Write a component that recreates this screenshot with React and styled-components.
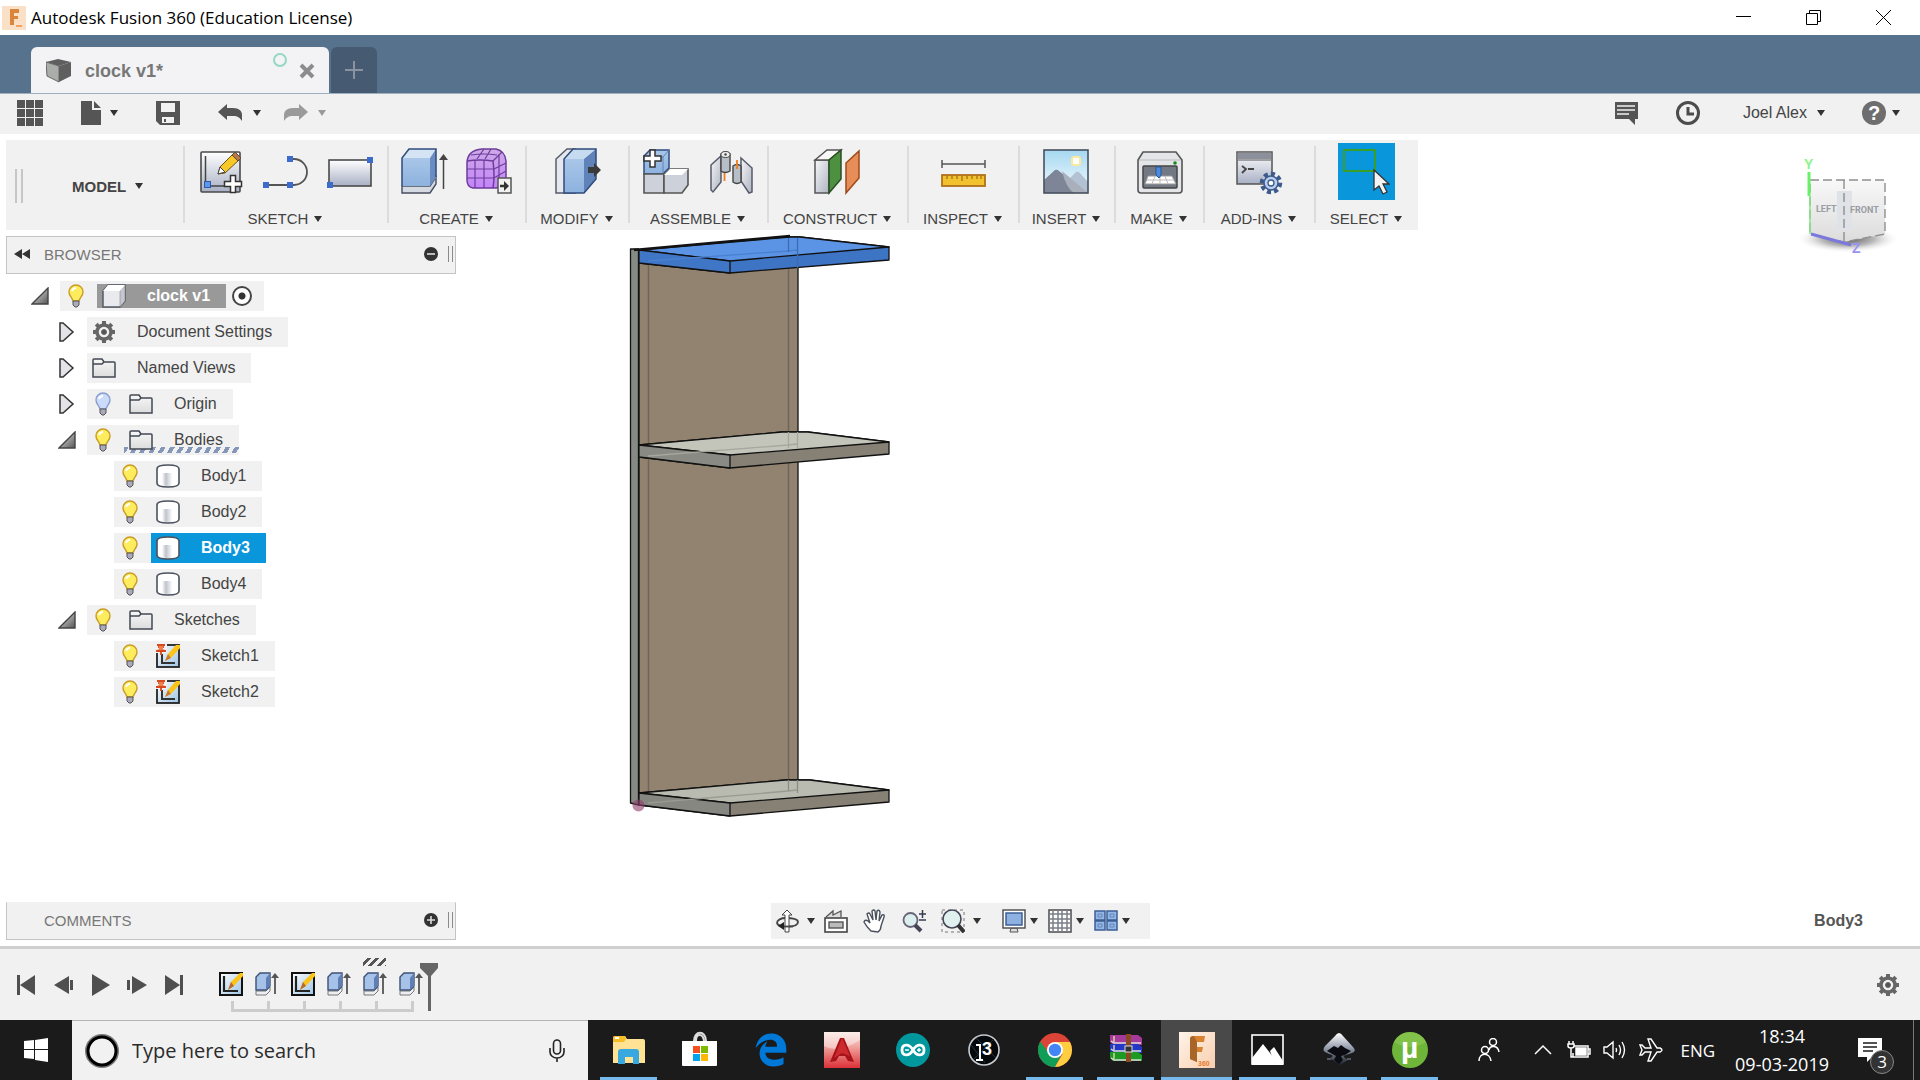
import React, { useState } from 'react';
import styled, { createGlobalStyle, css } from 'styled-components';
import { FaEdgeLegacy } from 'react-icons/fa';

const ribbonGroups = [
  { name: 'SKETCH', width: 204, icons: ['createSketch', 'line', 'rectangle'] },
  { name: 'CREATE', width: 138, icons: ['extrude', 'form'] },
  { name: 'MODIFY', width: 103, icons: ['pressPull'] },
  { name: 'ASSEMBLE', width: 139, icons: ['newComponent', 'joint'] },
  { name: 'CONSTRUCT', width: 140, icons: ['plane'] },
  { name: 'INSPECT', width: 111, icons: ['measure'] },
  { name: 'INSERT', width: 96, icons: ['picture'] },
  { name: 'MAKE', width: 89, icons: ['print'] },
  { name: 'ADD-INS', width: 111, icons: ['scripts'] },
  { name: 'SELECT', width: 104, icons: ['select'], active: true },
];

const treeRows = [
  { id: 'root', name: 'clock v1', level: 0, toggle: 'open', bulb: 'on', icon: 'component' },
  { id: 'settings', name: 'Document Settings', level: 1, toggle: 'closed', icon: 'gear' },
  { id: 'views', name: 'Named Views', level: 1, toggle: 'closed', icon: 'folder' },
  { id: 'origin', name: 'Origin', level: 1, toggle: 'closed', bulb: 'off', icon: 'folder' },
  { id: 'bodies', name: 'Bodies', level: 1, toggle: 'open', bulb: 'on', icon: 'folder', hatched: true },
  { id: 'body1', name: 'Body1', level: 2, bulb: 'on', icon: 'body' },
  { id: 'body2', name: 'Body2', level: 2, bulb: 'on', icon: 'body' },
  { id: 'body3', name: 'Body3', level: 2, bulb: 'on', icon: 'body' },
  { id: 'body4', name: 'Body4', level: 2, bulb: 'on', icon: 'body' },
  { id: 'sketches', name: 'Sketches', level: 1, toggle: 'open', bulb: 'on', icon: 'folder' },
  { id: 'sketch1', name: 'Sketch1', level: 2, bulb: 'on', icon: 'sketch' },
  { id: 'sketch2', name: 'Sketch2', level: 2, bulb: 'on', icon: 'sketch' },
];

const playback = [
  { name: 'Go to beginning', path: 'M1 1h3v20H1zM19 1v20L4 11z' },
  { name: 'Step back', path: 'M16 2v18L1 11zM17 6h3v10h-3z' },
  { name: 'Play', path: 'M2 0l18 11L2 22z' },
  { name: 'Step forward', path: 'M5 2v18l15-9zM0 6h3v10H0z' },
  { name: 'Go to end', path: 'M16 1h3v20h-3zM1 1v20l15-10z' },
];

const features = ['sketch', 'extrude', 'sketch', 'extrude', 'extrude', 'extrude'];

const taskApps = [
  { name: 'File Explorer', icon: 'explorer', open: true },
  { name: 'Microsoft Store', icon: 'store' },
  { name: 'Microsoft Edge', icon: 'edge' },
  { name: 'AutoCAD', icon: 'autocad' },
  { name: 'Arduino', icon: 'arduino' },
  { name: 'Processing', icon: 'processing' },
  { name: 'Google Chrome', icon: 'chrome', open: true },
  { name: 'WinRAR', icon: 'winrar', open: true },
  { name: 'Fusion 360', icon: 'fusion', open: true, active: true },
  { name: 'Photos', icon: 'photos', open: true },
  { name: 'Inkscape', icon: 'inkscape', open: true },
  { name: 'uTorrent', icon: 'utorrent', open: true },
];

const App = () => {
  const [selected, setSelected] = useState('body3');
  const [search, setSearch] = useState('');

  return (
    <S_App>
      <GlobalStyle />
      <Gradients />
      <TitleBar />
      <TabBar />
      <QuickBar />
      <S_Viewport>
        <Model />
        <ViewCube />
        <Ribbon />
        <S_Panel>
          <S_PanelHeader>
            <S_PlainButton aria-label="Collapse browser">
              <svg width="16" height="10" viewBox="0 0 16 10">
                <path d="M8 0v10L0 5zM16 0v10L8 5z" fill="#333" />
              </svg>
            </S_PlainButton>
            <S_PanelTitle>BROWSER</S_PanelTitle>
            <PanelEnd sign="minus" />
          </S_PanelHeader>
          <S_Tree>
            {treeRows.map((row) => (
              <TreeRow key={row.id} row={row} selected={selected === row.id} onSelect={setSelected} />
            ))}
          </S_Tree>
        </S_Panel>
        <S_ViewportFooter>
          <S_PanelHeader $bottom>
            <S_PanelIndent />
            <S_PanelTitle>COMMENTS</S_PanelTitle>
            <PanelEnd sign="plus" />
          </S_PanelHeader>
          <NavBar />
          <S_SelectionName>Body3</S_SelectionName>
        </S_ViewportFooter>
      </S_Viewport>
      <Timeline />
      <S_Taskbar>
        <S_Start aria-label="Start">
          <svg width="24" height="24" viewBox="0 0 24 24" fill="#fff">
            <path d="M0 3l10-1v9H0zM11 2l13-2v11H11zM0 12h10v9L0 20zM11 12h13v12l-13-2z" />
          </svg>
        </S_Start>
        <S_Search>
          <svg width="34" height="34" viewBox="0 0 34 34" fill="none">
            <circle cx="17" cy="17" r="15" stroke="#777" strokeWidth="4" />
            <circle cx="17" cy="17" r="14" stroke="#000" strokeWidth="3" />
          </svg>
          <S_SearchInput
            type="text"
            aria-label="Type here to search"
            placeholder="Type here to search"
            value={search}
            onChange={(e) => setSearch(e.target.value)}
          />
          <svg width="18" height="24" viewBox="0 0 18 24" fill="none" stroke="#222" strokeWidth="1.6">
            <rect x="5.5" y="1" width="7" height="14" rx="3.5" />
            <path d="M2 9v4a7 6 0 0 0 14 0V9M9 19v4" />
          </svg>
        </S_Search>
        <S_TaskApps>
          {taskApps.map((app) => (
            <S_TaskApp key={app.name} aria-label={app.name} $open={app.open} $active={app.active}>
              <TaskIcon name={app.icon} />
            </S_TaskApp>
          ))}
        </S_TaskApps>
        <Tray />
      </S_Taskbar>
    </S_App>
  );
};

export default App;

const Gradients = () => (
  <S_Defs aria-hidden="true">
    <defs>
      <linearGradient id="metal" x1="0" y1="0" x2="0" y2="1">
        <stop offset="0" stopColor="#fff" />
        <stop offset="1" stopColor="#a8b0c4" />
      </linearGradient>
      <linearGradient id="silver" x1="0" y1="0" x2="1" y2="1">
        <stop offset="0" stopColor="#f6f6f8" />
        <stop offset="1" stopColor="#aeb4c0" />
      </linearGradient>
      <linearGradient id="blueFace" x1="0" y1="0" x2="0" y2="1">
        <stop offset="0" stopColor="#a9c6e8" />
        <stop offset="1" stopColor="#8cb2de" />
      </linearGradient>
      <linearGradient id="purple" x1="0" y1="0" x2="0" y2="1">
        <stop offset="0" stopColor="#cdaae6" />
        <stop offset="1" stopColor="#c384fb" />
      </linearGradient>
      <linearGradient id="sky" x1="0" y1="0" x2="0" y2="1">
        <stop offset="0" stopColor="#a5d8f0" />
        <stop offset="1" stopColor="#f5fbff" />
      </linearGradient>
      <linearGradient id="arrowFill" x1="0" y1="0" x2="1" y2="1">
        <stop offset="0" stopColor="#eee" />
        <stop offset="1" stopColor="#555" />
      </linearGradient>
      <linearGradient id="bodyFill" x1="0" y1="0" x2="1" y2="0">
        <stop offset="0" stopColor="#fff" />
        <stop offset="0.3" stopColor="#bfc3cc" />
        <stop offset="0.8" stopColor="#fff" />
      </linearGradient>
      <linearGradient id="sketchFill" x1="0" y1="0" x2="1" y2="1">
        <stop offset="0" stopColor="#fff" />
        <stop offset="1" stopColor="#9cc4e6" />
      </linearGradient>
      <linearGradient id="cubeFace" x1="0" y1="0" x2="0" y2="1">
        <stop offset="0" stopColor="#f8f8f8" />
        <stop offset="1" stopColor="#dcdcdc" />
      </linearGradient>
      <radialGradient id="cubeShadow">
        <stop offset="0" stopColor="#555" />
        <stop offset="0.5" stopColor="#999" stopOpacity="0.7" />
        <stop offset="1" stopColor="#fff" stopOpacity="0" />
      </radialGradient>
      <linearGradient id="redTile" x1="0" y1="0" x2="0" y2="1">
        <stop offset="0" stopColor="#fbe3dd" />
        <stop offset="0.4" stopColor="#f0a59f" />
        <stop offset="1" stopColor="#dc3038" />
      </linearGradient>
      <linearGradient id="orangeTile" x1="0" y1="0" x2="1" y2="1">
        <stop offset="0" stopColor="#fff4ea" />
        <stop offset="1" stopColor="#f8cfae" />
      </linearGradient>
      <linearGradient id="ink" x1="0" y1="0" x2="0" y2="1">
        <stop offset="0" stopColor="#fff" />
        <stop offset="0.5" stopColor="#8d95a6" />
        <stop offset="1" stopColor="#1c222c" />
      </linearGradient>
    </defs>
  </S_Defs>
);

const WindowButton = ({ name, path }) => (
  <S_WindowControl aria-label={name}>
    <svg width="15" height="15" viewBox="0 0 15 15" fill="none" stroke="#000">
      <path d={path} />
    </svg>
  </S_WindowControl>
);

const TitleBar = () => (
  <S_TitleBar>
    <svg width="24" height="24" viewBox="0 0 24 24">
      <rect width="24" height="24" fill="#fbe0c8" />
      <path d="M8 3h9v4h-5v3h4v3h-4v6H8z" fill="#d9853b" />
      <path d="M14 20h6" stroke="#f2a45e" strokeWidth="2" />
    </svg>
    <S_TitleText>Autodesk Fusion 360 (Education License)</S_TitleText>
    <WindowButton name="Minimize" path="M0 6.5h15" />
    <WindowButton name="Restore" path="M0.5 3.5h11v11h-11zM3.5 3.5v-3h11v11h-3" />
    <WindowButton name="Close" path="M0 0l15 15M15 0L0 15" />
  </S_TitleBar>
);

const TabBar = () => (
  <S_TabBar>
    <S_Tab>
      <svg width="25" height="24" viewBox="0 0 25 24">
        <path d="M0 3L12 0l13 3-12 4z" fill="#5f5f5f" />
        <path d="M0 3l13 4v16L1 17z" fill="#abadab" stroke="#666" />
        <path d="M13 7l12-4v14l-12 6z" fill="#5f5f5f" />
      </svg>
      <S_TabName>clock v1*</S_TabName>
      <S_SyncRing />
      <S_PlainButton aria-label="Close tab">
        <svg width="16" height="16" viewBox="0 0 16 16">
          <path d="M2 2l12 12M14 2L2 14" stroke="#8c8c8c" strokeWidth="4" />
        </svg>
      </S_PlainButton>
    </S_Tab>
    <S_NewTab aria-label="New tab">
      <svg width="18" height="18" viewBox="0 0 18 18">
        <path d="M9 0v18M0 9h18" stroke="#8b93a0" strokeWidth="2" />
      </svg>
    </S_NewTab>
  </S_TabBar>
);

const QuickBar = () => (
  <S_QuickBar>
    <S_QuickGroup $gap={38}>
      <S_PlainButton aria-label="Data panel">
        <svg width="26" height="26" viewBox="0 0 26 26" fill="#555">
          <path d="M0 0h8v8H0zM9 0h8v8H9zM18 0h8v8h-8zM0 9h8v8H0zM9 9h8v8H9zM18 9h8v8h-8zM0 18h8v8H0zM9 18h8v8H9zM18 18h8v8h-8z" />
        </svg>
      </S_PlainButton>
      <S_PlainButton aria-label="File" $gap={9}>
        <svg width="20" height="24" viewBox="0 0 20 24" fill="#555">
          <path d="M0 0h11v9h9v15H0zM13 0l7 7h-7z" />
        </svg>
        <S_Caret />
      </S_PlainButton>
      <S_PlainButton aria-label="Save">
        <svg width="24" height="24" viewBox="0 0 24 24">
          <path d="M0 0h24v24H4l-4-4z" fill="#555" />
          <path d="M5 2h14v9H5zM6 16h12v6H6z" fill="#f1f1f1" />
          <path d="M8 18h2v3H8z" fill="#555" />
        </svg>
      </S_PlainButton>
      <S_QuickGroup $gap={22}>
        <S_PlainButton aria-label="Undo" $gap={10}>
          <svg width="25" height="18" viewBox="0 0 25 18">
            <path d="M0 8l9-8v4h6c6 0 9 3 9 7v6c-2-3-4-5-9-5H9v4z" fill="#555" />
          </svg>
          <S_Caret />
        </S_PlainButton>
        <S_PlainButton aria-label="Redo" $gap={10}>
          <svg width="25" height="18" viewBox="0 0 25 18">
            <path d="M25 8l-9-8v4h-6c-6 0-9 3-9 7v6c2-3 4-5 9-5h6v4z" fill="#9a9a9a" />
          </svg>
          <S_Caret $light />
        </S_PlainButton>
      </S_QuickGroup>
    </S_QuickGroup>
    <S_QuickGroup $gap={37}>
      <S_PlainButton aria-label="Comments">
        <svg width="25" height="23" viewBox="0 0 25 23">
          <path d="M1 0h23v17h-3v6l-6-6H1z" fill="#555" />
          <path d="M3 4h18M3 8h18M3 12h12" stroke="#f1f1f1" strokeWidth="1.5" />
        </svg>
      </S_PlainButton>
      <S_PlainButton aria-label="Job status">
        <svg width="24" height="24" viewBox="0 0 24 24" fill="none" stroke="#4c4c4c">
          <circle cx="12" cy="12" r="10.5" strokeWidth="3" />
          <path d="M12 6v7h6" strokeWidth="3" />
        </svg>
      </S_PlainButton>
      <S_UserButton $gap={10}>
        Joel Alex
        <S_Caret />
      </S_UserButton>
      <S_PlainButton aria-label="Help" $gap={6}>
        <S_HelpDisc>?</S_HelpDisc>
        <S_Caret />
      </S_PlainButton>
    </S_QuickGroup>
  </S_QuickBar>
);

const Ribbon = () => (
  <S_Ribbon>
    <S_Workspace>
      <S_Grip />
      <S_WorkspaceButton $gap={9}>
        MODEL
        <S_Caret />
      </S_WorkspaceButton>
    </S_Workspace>
    {ribbonGroups.map((group) => (
      <S_RibbonGroup key={group.name} $width={group.width}>
        <S_RibbonIcons>
          {group.icons.map((icon) => (
            <S_RibbonTool key={icon} aria-label={icon} $active={group.active}>
              <RibbonIcon name={icon} />
            </S_RibbonTool>
          ))}
        </S_RibbonIcons>
        <S_RibbonLabel $gap={6}>
          {group.name}
          <S_Caret />
        </S_RibbonLabel>
      </S_RibbonGroup>
    ))}
  </S_Ribbon>
);

const ribbonDrawings = {
  createSketch: (
    <>
      <rect x="4" y="4" width="39" height="40" rx="1" fill="url(#metal)" stroke="#4a4a4a" strokeWidth="1.6" />
      <path d="M8.5 8v30H30" fill="none" stroke="#444" strokeWidth="1.5" />
      <rect x="7.5" y="33.5" width="6" height="6" fill="#5e96e8" stroke="#2b5ab0" />
      <path d="M21 26l2-7L37 5l6 6-15 14z" fill="#f8c926" stroke="#6b5210" />
      <path d="M35 7l3-3 6 6-3 3z" fill="#b97846" stroke="#5d4a3a" />
      <path d="M21 26l2-7 5 5z" fill="#fff" stroke="#444" />
      <path d="M33.5 27.5h5v6h6v5h-6v6h-5v-6h-6v-5h6z" fill="#fff" stroke="#333" strokeWidth="1.5" />
    </>
  ),
  line: (
    <>
      <path d="M5 37h28a13 13 0 0 0 0-26h-4" fill="none" stroke="#555" strokeWidth="1.8" />
      <path d="M2 34h6v6H2zM26 34h6v6h-6zM26 8h6v6h-6z" fill="#3b6ccb" />
    </>
  ),
  rectangle: (
    <>
      <rect x="4" y="12" width="42" height="26" fill="url(#metal)" stroke="#4a4a4a" strokeWidth="1.6" />
      <path d="M2 34h6v6H2zM42 9h6v6h-6z" fill="#3b6ccb" />
    </>
  ),
  extrude: (
    <>
      <path d="M2 38h28l6-9v7l-6 9H2z" fill="#d5d9e2" stroke="#474d5c" strokeWidth="1.4" />
      <path d="M2 10h28v28H2z" fill="url(#blueFace)" />
      <path d="M2 10l7-9h27l-6 9z" fill="#d4e4f4" />
      <path d="M30 10l6-9v29l-6 8z" fill="#6a8cc0" />
      <path d="M2 38V10l7-9h27v28" fill="none" stroke="#2f4b7c" strokeWidth="1.5" />
      <path d="M43.5 10v31" stroke="#444" strokeWidth="1.5" />
      <path d="M39 12l4.5-6 4.5 6z" fill="#444" />
    </>
  ),
  form: (
    <>
      <path d="M3 14Q4 2 18 1h14q9 2 10 12v16q-2 10-10 11H9q-6-1-6-8z" fill="url(#purple)" stroke="#6e3d9c" strokeWidth="1.5" />
      <path d="M3 13q13-2 26 0 2 15 0 27" fill="none" stroke="#6e3d9c" strokeWidth="1.5" />
      <path d="M11 12v28M20 12v28M3 21h27l12-6M3 30h27l12-7M29 13l9-9M7 7q13-2 26 0M13 11l7-10M21 11l6-10M35 6v31" fill="none" stroke="#6e3d9c" strokeWidth="1.2" />
      <rect x="34" y="30" width="13" height="15" fill="#f1f1f1" stroke="#555" strokeWidth="1.5" />
      <path d="M36 38h5" stroke="#333" strokeWidth="2.5" />
      <path d="M40 33l5 5-5 5z" fill="#333" />
    </>
  ),
  pressPull: (
    <>
      <path d="M3 45V11L14 1h8v44z" fill="#e6e8ee" stroke="#555b6a" strokeWidth="1.5" />
      <path d="M11 11h20v34H11z" fill="url(#blueFace)" />
      <path d="M11 11l9-10h23L31 11z" fill="#c7dbf0" />
      <path d="M31 11L43 1v30L31 45z" fill="#5f83b8" />
      <path d="M11 45V11l9-10h23v30L31 45z" fill="none" stroke="#2f4b7c" strokeWidth="1.5" />
      <path d="M35 19h6v-4l7 7-7 7v-4h-6z" fill="#3a3a3a" />
    </>
  ),
  newComponent: (
    <>
      <path d="M2 8l6-6h19v18l-6 6H2z" fill="url(#blueFace)" stroke="#2f4b7c" strokeWidth="1.5" />
      <path d="M21 26V9l6-7M21 9H8" fill="none" stroke="#5f83b8" />
      <path d="M2 26h20v19H2z" fill="#cdd1d9" stroke="#555" strokeWidth="1.6" />
      <path d="M22 27l6-6h18v16l-6 8H22z" fill="#cdd1d9" stroke="#555" strokeWidth="1.6" />
      <path d="M22 27l6-6h18l-6 6z" fill="#fff" />
      <path d="M8 2h5v6h6v5h-6v6H8v-6H2V8h6z" fill="#fff" stroke="#333" strokeWidth="1.5" />
    </>
  ),
  joint: (
    <>
      <path d="M5 17l10-9v26L7 44l-2-2z" fill="url(#silver)" stroke="#555b6a" strokeWidth="1.5" />
      <path d="M15 6v17q4 3 9 0V6q-4-4-9 0z" fill="#b8bec8" stroke="#444" strokeWidth="1.4" />
      <ellipse cx="19.5" cy="6.5" rx="4.5" ry="3" fill="#eee" stroke="#444" />
      <circle cx="19.5" cy="6.5" r="1.2" fill="#444" />
      <path d="M35 10l11 10v24l-3 1-8-12z" fill="url(#silver)" stroke="#555b6a" strokeWidth="1.5" />
      <path d="M27 18v16q4 3 8 0V18q-4-3-8 0z" fill="#b8bec8" stroke="#444" strokeWidth="1.4" />
      <path d="M18.5 25v8M31 12v9" stroke="#f07c1e" strokeWidth="1.8" />
    </>
  ),
  plane: (
    <>
      <path d="M2 12h14v33H2z" fill="url(#silver)" stroke="#555" strokeWidth="1.5" />
      <path d="M2 12L14 2h14L16 12z" fill="#f8f8f8" stroke="#555" strokeWidth="1.5" />
      <path d="M16 12L28 2v29L16 45z" fill="#4d9140" stroke="#2a4d24" strokeWidth="1.5" />
      <path d="M33 15L46 3v27L33 45z" fill="#e68d58" stroke="#9c4a1c" strokeWidth="1.5" />
    </>
  ),
  measure: (
    <>
      <path d="M3 12v8M46 12v8M3 16h43" stroke="#555" strokeWidth="1.5" />
      <rect x="3" y="27" width="43" height="11" fill="#f2c12e" stroke="#b0701c" strokeWidth="1.8" />
      <path d="M8 28v3M13 28v3M18 28v3M23 28v5M28 28v3M33 28v3M38 28v3M42 28v3" stroke="#8a5a12" />
    </>
  ),
  picture: (
    <>
      <rect x="2" y="2" width="44" height="43" fill="url(#sky)" />
      <rect x="30" y="9" width="8" height="8" rx="2" fill="#fff" stroke="#fbe9a0" strokeWidth="2" />
      <path d="M24 34l10-10q2-1 4 1l8 9v11H24z" fill="#b3c2d2" />
      <path d="M2 32l11-10q2-1 4 1l28 22H2z" fill="#7d8596" />
      <path d="M20 23l26 22H32q-8-5-12-22z" fill="#a9b0bc" />
      <rect x="2" y="2" width="44" height="43" fill="none" stroke="#46505e" strokeWidth="1.6" />
    </>
  ),
  print: (
    <>
      <path d="M3 12l5-8h33l6 8v30q0 3-3 3H6q-3 0-3-3z" fill="#e4e5e8" stroke="#555" strokeWidth="1.6" />
      <path d="M4 12h42" stroke="#bbb" />
      <rect x="8" y="18" width="34" height="22" rx="1" fill="#737984" stroke="#444" strokeWidth="1.5" />
      <path d="M13 28h24l4 8H10z" fill="#fff" stroke="#999" />
      <path d="M20 28l-3 8M25 28v8M30 28l3 8M12 32h27" stroke="#bbb" />
      <path d="M21 19h5v8l-2 3-3-3z" fill="#4a8ae0" stroke="#2558a0" />
      <circle cx="40" cy="15" r="1.8" fill="#128a1c" />
    </>
  ),
  scripts: (
    <>
      <rect x="2" y="4" width="35" height="32" fill="url(#metal)" stroke="#555" strokeWidth="1.5" />
      <rect x="3" y="5" width="33" height="6" fill="#8b909b" />
      <path d="M3 12h33" stroke="#555" />
      <path d="M7 18l4 3-4 4M13 21h6" fill="none" stroke="#444" strokeWidth="1.8" />
      <circle cx="36" cy="35" r="9" fill="none" stroke="#3d5a8c" strokeWidth="4.5" strokeDasharray="4 3" />
      <circle cx="36" cy="35" r="7" fill="#b9cfee" stroke="#3d5a8c" strokeWidth="1.5" />
      <circle cx="36" cy="35" r="3" fill="#fff" stroke="#3d5a8c" strokeWidth="1.3" />
    </>
  ),
  select: (
    <>
      <rect x="2" y="2" width="31" height="21" fill="none" stroke="#3a9f26" strokeWidth="2" />
      <path d="M32 22v20l5-4 4 8 4-2-4-8h6z" fill="#f4f4f4" stroke="#333" strokeWidth="1.3" />
    </>
  ),
};

const RibbonIcon = ({ name }) => (
  <svg width="48" height="48" viewBox="0 0 48 48">
    {ribbonDrawings[name]}
  </svg>
);

const Gear = () => (
  <svg width="24" height="24" viewBox="0 0 24 24" fill="none" stroke="#666">
    <path d="M12 1v22M1 12h22M4.2 4.2l15.6 15.6M19.8 4.2L4.2 19.8" strokeWidth="4" />
    <circle cx="12" cy="12" r="7" fill="#f1f1f1" strokeWidth="3.5" />
    <circle cx="12" cy="12" r="2.5" fill="#555" strokeWidth="1" />
  </svg>
);

const treeDrawings = {
  component: (
    <>
      <path d="M1 7l5-6h17v16l-5 6H1z" fill="#e9eaee" stroke="#555b66" strokeWidth="1.5" />
      <path d="M18 7v16l5-6V1z" fill="#c4c7cf" stroke="#777" strokeWidth="0.5" />
      <path d="M1 7l5-6h17l-5 6z" fill="#fff" />
    </>
  ),
  folder: (
    <path d="M1 21V4q0-1 1-1h8l2 3h10q1 0 1 1v14zM1 8h9l2-2" fill="url(#cubeFace)" stroke="#434854" strokeWidth="1.5" />
  ),
  body: (
    <>
      <path d="M1 5q0-4 11-4t11 4v14q0 4-11 4T1 19z" fill="#fff" stroke="#4c525e" strokeWidth="1.6" />
      <path d="M6 9h13v12q-7 2-13 0z" fill="url(#bodyFill)" />
    </>
  ),
  sketch: (
    <>
      <rect x="1" y="1" width="22" height="22" fill="url(#sketchFill)" stroke="#222" strokeWidth="1.8" />
      <path d="M0 0h11v9H0z" fill="#f1f1f1" />
      <path d="M6 10v9h13" fill="none" stroke="#333" strokeWidth="2" />
      <path d="M9 17l3-7 8-9h4v3l-9 10z" fill="#fcc419" />
      <path d="M12 10l3 4-6 3z" fill="#c9793a" />
      <path d="M1 1h8M3 1v3M7 1v3M0 7h10M5 7v4" fill="none" stroke="#d8491f" strokeWidth="1.8" />
      <path d="M3 2h4v3l2 1H1l2-1z" fill="#f0804c" />
    </>
  ),
};

const TreeIcon = ({ name }) => {
  if (name === 'gear') return <Gear />;
  return (
    <svg width="24" height="24" viewBox="0 0 24 24">
      {treeDrawings[name]}
    </svg>
  );
};

const Bulb = ({ on }) => (
  <svg width="16" height="24" viewBox="0 0 16 24">
    <path
      d="M8 1a7 7 0 0 1 7 7c0 4-3 5-4 9H5C4 13 1 12 1 8a7 7 0 0 1 7-7z"
      fill={on ? '#fcec5e' : '#cbdcfb'}
      stroke={on ? '#c99c28' : '#8a9dcc'}
      strokeWidth="1.4"
    />
    <path d="M4 7q1-3 4-3" fill="none" stroke="#fff" strokeWidth="2" />
    <path d="M5 17h6v4l-2 2H7l-2-2z" fill="#aab" stroke="#555" />
  </svg>
);

const TreeRow = ({ row, selected, onSelect }) => (
  <S_TreeRow $level={row.level}>
    <S_Toggle aria-label={row.name} disabled={!row.toggle}>
      {row.toggle === 'open' && (
        <svg width="18" height="18" viewBox="0 0 18 18">
          <path d="M1 17L17 1v16z" fill="url(#arrowFill)" stroke="#444" strokeWidth="1.4" />
        </svg>
      )}
      {row.toggle === 'closed' && (
        <svg width="16" height="20" viewBox="0 0 16 20">
          <path d="M1 1h3l10 9-10 9H1z" fill="#e4e4e8" stroke="#333" strokeWidth="1.5" />
        </svg>
      )}
    </S_Toggle>
    <S_TreeChip>
      {row.bulb && (
        <S_BulbButton aria-label={`Show ${row.name}`}>
          <Bulb on={row.bulb === 'on'} />
        </S_BulbButton>
      )}
      <S_TreeItem $selected={selected} $root={row.level === 0} $hatched={row.hatched} onClick={() => onSelect(row.id)}>
        <TreeIcon name={row.icon} />
        {row.name}
      </S_TreeItem>
      {row.level === 0 && <S_Radio type="radio" name="activeComponent" aria-label="Activate clock v1" defaultChecked />}
    </S_TreeChip>
  </S_TreeRow>
);

const PanelEnd = ({ sign }) => (
  <>
    <S_PlainButton aria-label={sign === 'minus' ? 'Minimize panel' : 'Expand panel'}>
      <svg width="14" height="14" viewBox="0 0 14 14">
        <circle cx="7" cy="7" r="7" fill="#333" />
        <path d={sign === 'minus' ? 'M3 7h8' : 'M3 7h8M7 3v8'} stroke="#ddd" strokeWidth="1.6" />
      </svg>
    </S_PlainButton>
    <S_PanelGrip />
  </>
);

const Model = () => (
  <S_Model width="264" height="590" viewBox="628 232 264 590" stroke="#111" strokeWidth="1.3">
    <path d="M639 255h159v528l-10 8-149 4z" fill="#91836f" />
    <path d="M648.5 262v530M788.5 262v525" stroke="#6f6658" strokeWidth="1.5" />
    <path d="M630.5 249h8v556l-8-2z" fill="#868a84" />

    <path d="M639 793l146-13h25l79 10v12l-159 14-91-11z" fill="#868075" />
    <path d="M639 793l146-13h25l79 10-159 13z" fill="#b9bab0" />
    <path d="M639 793l91 10v13l-91-11z" fill="#868780" />
    <path d="M648 803l140-12 9-1" fill="none" stroke="#999a90" />
    <path d="M788.5 780v11M797.5 780v13" stroke="#8c8d84" />

    <path d="M639 445l143-13h26l81 10v12l-159 14-91-11z" fill="#868075" />
    <path d="M639 445l143-13h26l81 10-159 13z" fill="#c4c5ba" />
    <path d="M639 445l91 10v13l-91-11z" fill="#8a8a84" />
    <path d="M648 456l140-11 9-1" fill="none" stroke="#a6a79d" />
    <path d="M788.5 432v16M797.5 432v16" stroke="#a6a79d" />

    <path d="M639 250l151-13h10l89 10v13l-159 13-91-10z" fill="#3e74c4" />
    <path d="M639 250l151-13h10l89 10-159 14z" fill="#5b94e4" />
    <path d="M639 250l91 11v12l-91-10z" fill="#4076c6" />
    <path d="M648 261l140-10 9-1" fill="none" stroke="#4a80cf" />
    <path d="M788.5 238v14M797.5 238v30" stroke="#3c6cb4" />
    <path d="M634 250l156-14" strokeWidth="2.5" />
    <circle cx="638.5" cy="805.5" r="6" fill="#90406c" fillOpacity="0.6" stroke="none" />
  </S_Model>
);

const ViewCube = () => (
  <S_ViewCube width="110" height="104" viewBox="1796 152 110 104">
    <ellipse cx="1848" cy="239" rx="52" ry="14" fill="url(#cubeShadow)" />
    <path d="M1810 180h34v62l-34-8zM1844 180h41v54l-41 8z" fill="url(#cubeFace)" />
    <path d="M1837 191h15v39h-15z" fill="#dfe2e6" />
    <path d="M1810 180h75v54l-41 8-34-8zM1844 180v62" fill="none" stroke="#8f8f8f" strokeWidth="1.4" strokeDasharray="9 4" />
    <path d="M1809 172v24" stroke="#66f266" strokeWidth="3" />
    <path d="M1810 196v38" stroke="#86e886" strokeWidth="1.5" />
    <path d="M1811 234l40 11" stroke="#7c78dc" strokeWidth="3" />
    <S_AxisText x="1804" y="169" fill="#8cf58c">Y</S_AxisText>
    <S_AxisText x="1852" y="253" fill="#9694f2">Z</S_AxisText>
    <S_CubeText x="1816" y="212">LEFT</S_CubeText>
    <S_CubeText x="1850" y="213">FRONT</S_CubeText>
  </S_ViewCube>
);

const navDrawings = {
  orbit: (
    <>
      <path d="M23 13c0 6-20 6-21 1 0-3 4-5 9-5 6 0 12 1 12 4" fill="none" stroke="#444" strokeWidth="1.8" />
      <path d="M10 23V6H7l5-5 5 5h-3v17z" fill="#fff" stroke="#444" />
      <path d="M10 17.5h8" stroke="#444" strokeWidth="1.8" />
      <path d="M3 17l6-4v8z" fill="#222" />
    </>
  ),
  look: (
    <>
      <path d="M2 8l7-6v4l8-4v6" fill="#ddd" stroke="#555" strokeWidth="1.3" />
      <rect x="1" y="9" width="22" height="14" fill="#fff" stroke="#444" strokeWidth="1.6" />
      <rect x="5" y="13" width="14" height="6" fill="#bbb" stroke="#555" strokeWidth="1.4" />
    </>
  ),
  pan: (
    <path
      d="M8 22C4 18 2 15 1 13q1-3 4-1l2 2L4 5q2-2 3 0l3 6-1-9q2-2 3 0l1 9 1-9q2-2 3 1l-1 9 3-6q3-1 2 2l-3 9q0 4-3 6z"
      fill="#fff"
      stroke="#4a505c"
      strokeWidth="1.4"
    />
  ),
  zoom: (
    <>
      <circle cx="8.5" cy="11" r="7" fill="#dceeee" stroke="#667" strokeWidth="1.8" />
      <path d="M13 16l6 6" stroke="#445" strokeWidth="4" />
      <path d="M17 5h7M20.5 1v8M17 11h7" stroke="#333c50" strokeWidth="1.5" />
    </>
  ),
  zoomWindow: (
    <>
      <rect x="1" y="1" width="22" height="22" fill="none" stroke="#777" strokeDasharray="3 3" />
      <circle cx="11" cy="10" r="9" fill="#dff0ee" stroke="#445" strokeWidth="1.6" />
      <path d="M17 16l6 7" stroke="#333" strokeWidth="4" />
    </>
  ),
  display: (
    <>
      <path d="M9 19h6l1 4H8z" fill="#ddd" stroke="#555" />
      <rect x="1" y="1" width="22" height="18" fill="#fff" stroke="#555" strokeWidth="1.5" />
      <rect x="4" y="4" width="16" height="12" fill="#8db2e2" stroke="#3d5f96" strokeWidth="1.5" />
    </>
  ),
  grid: (
    <>
      <rect x="1" y="1" width="22" height="22" fill="#fff" stroke="#555" strokeWidth="1.6" />
      <path d="M5 1v22M10 1v22M14 1v22M19 1v22M1 5h22M1 10h22M1 14h22M1 19h22" stroke="#7a8088" strokeWidth="1.5" />
    </>
  ),
  viewports: (
    <>
      <path d="M1 2h10v9H1zM13 2h10v9H13zM1 12h10v9H1zM13 12h10v9H13z" fill="#93b7e4" stroke="#3d5f96" strokeWidth="1.5" />
      <path d="M4 5h4v3H4zM16 5h4v3h-4zM4 15h4v3H4zM16 15h4v3h-4z" fill="none" stroke="#6286bc" />
    </>
  ),
};

const NavButton = ({ name, gap, caret }) => (
  <S_PlainButton aria-label={name} $gap={gap}>
    <svg width="24" height="24" viewBox="0 0 24 24">
      {navDrawings[name]}
    </svg>
    {caret && <S_Caret />}
  </S_PlainButton>
);

const NavBar = () => (
  <S_NavBar>
    <NavButton name="orbit" gap={8} caret />
    <S_NavGroup $gap={15}>
      <NavButton name="look" />
      <NavButton name="pan" />
      <NavButton name="zoom" />
      <NavButton name="zoomWindow" gap={8} caret />
    </S_NavGroup>
    <S_NavGroup $gap={10} $indent>
      <NavButton name="display" gap={4} caret />
      <NavButton name="grid" gap={4} caret />
      <NavButton name="viewports" gap={4} caret />
    </S_NavGroup>
  </S_NavBar>
);

const Timeline = () => (
  <S_Timeline>
    <S_Playback>
      {playback.map((item) => (
        <S_PlainButton key={item.name} aria-label={item.name}>
          <svg width="20" height="22" viewBox="0 0 20 22">
            <path d={item.path} fill="#4f4f4f" />
          </svg>
        </S_PlainButton>
      ))}
    </S_Playback>
    <S_Track>
      <S_Features>
        {features.map((feature, index) => (
          <S_Feature key={index} aria-label={`${feature} ${index + 1}`} $hatched={index === 4}>
            <svg width="24" height="24" viewBox="0 0 24 24">
              {feature === 'sketch' ? (
                <>
                  <rect x="1" y="1" width="22" height="22" fill="url(#sketchFill)" stroke="#111" strokeWidth="2" />
                  <path d="M5 4v15h14" fill="none" stroke="#222" strokeWidth="2.2" />
                  <path d="M9 18l3-8 9-9h3v3l-9 10z" fill="#fcc419" />
                  <path d="M12 10l3 4-6 4z" fill="#b5693a" />
                </>
              ) : (
                <>
                  <path d="M1 19h10l4-4v4l-4 4H1z" fill="#eceef2" stroke="#777" />
                  <path d="M1 18V5l4-4h10v13l-4 4z" fill="#a6c2e8" stroke="#3d5075" strokeWidth="1.4" />
                  <path d="M11 18V6l4-5v13z" fill="#5f7eb4" />
                  <path d="M20 22V3" stroke="#555" strokeWidth="1.8" />
                  <path d="M16 6l4-5 4 5z" fill="#555" />
                </>
              )}
            </svg>
          </S_Feature>
        ))}
        <S_Marker width="18" height="48" viewBox="0 0 18 48" fill="#666">
          <path d="M0 0h18v5l-7 8v35H8V13L0 5z" />
        </S_Marker>
      </S_Features>
      <S_Bracket>
        {features.slice(1).map((feature, index) => (
          <S_BracketStep key={index} />
        ))}
      </S_Bracket>
    </S_Track>
    <S_PlainButton aria-label="Timeline settings">
      <Gear />
    </S_PlainButton>
  </S_Timeline>
);

const S_LogoText = styled.text`
  font-family: 'Liberation Sans', Arial, sans-serif;
  font-size: ${({ $size }) => $size}px;
  font-weight: 700;
`;

const taskDrawings = {
  explorer: (
    <>
      <path d="M4 8q0-2 2-2h10l2 3h16q2 0 2 2v22H4z" fill="#ffe294" />
      <path d="M4 8q0-2 2-2h10l1 3-2 3H4z" fill="#f7be27" />
      <path d="M6 8h4" stroke="#fff" strokeWidth="2" />
      <path d="M9 34V22q0-3 3-3h15q3 0 3 3v12h-6v-7h-8v7z" fill="#37a8e0" />
    </>
  ),
  store: (
    <>
      <path d="M14 11c0-11 12-11 12 0M16 11c0-8 7-8 8 0" fill="none" stroke="#ddd" strokeWidth="2" />
      <path d="M2 11h35v24q0 1-1 1H3q-1 0-1-1z" fill="#fff" />
      <path d="M13 16h7v7h-7z" fill="#f25022" />
      <path d="M21 16h7v7h-7z" fill="#7fba00" />
      <path d="M13 24h7v7h-7z" fill="#00a4ef" />
      <path d="M21 24h7v7h-7z" fill="#ffb900" />
    </>
  ),
  autocad: (
    <>
      <rect x="2" y="2" width="36" height="36" fill="url(#redTile)" />
      <path d="M2 2h36v8Q16 24 2 16z" fill="#fff" fillOpacity="0.4" />
      <path d="M8 32l10-24h4l10 24-6-1-3-5h-6l-3 5z" fill="#a81319" />
      <path d="M20 8l8 18-8-3-8 5z" fill="#cb2a2e" />
    </>
  ),
  arduino: (
    <>
      <circle cx="20" cy="20" r="17" fill="#00979d" />
      <path d="M20 20c-4-7-11-6-11 0s7 7 11 0 11-6 11 0-7 7-11 0z" fill="none" stroke="#fff" strokeWidth="2.8" />
      <path d="M12 20h4M24 20h4M26 18v4" stroke="#fff" strokeWidth="1.4" />
    </>
  ),
  processing: (
    <>
      <circle cx="20" cy="20" r="15" fill="#06090c" stroke="#c8ccd0" strokeWidth="1.6" />
      <path d="M7 15l14 18M30 9L10 29M12 8l20 20" stroke="#1d3444" />
      <path d="M12 15h4v15M12 30h7" fill="none" stroke="#fff" strokeWidth="2" />
      <S_LogoText x="18" y="25" fill="#fff" $size={18}>3</S_LogoText>
    </>
  ),
  chrome: (
    <>
      <circle cx="20" cy="20" r="17" fill="#db4437" />
      <path d="M5.3 11.5A17 17 0 0 0 20 37l7-13.5h-13z" fill="#0f9d58" />
      <path d="M20 37a17 17 0 0 0 15-25H20l7.5 12z" fill="#ffcd40" />
      <circle cx="20" cy="20" r="8" fill="#fff" />
      <circle cx="20" cy="20" r="6.2" fill="#4285f4" />
    </>
  ),
  winrar: (
    <>
      <path d="M4 5h28l4 3v7H7l-3-3z" fill="#a63a9a" />
      <path d="M4 14h28l4 3v6H7l-3-2z" fill="#2438c8" />
      <path d="M4 22h28l4 3v6H7l-3-3z" fill="#1c9a24" />
      <path d="M5 11l3 2h27M5 19l3 2h27M5 28l3 2h27" fill="none" stroke="#ddd" strokeWidth="1.4" />
      <path d="M8 6v6M8 15v5M8 23v6" stroke="#e4d8a0" strokeWidth="1.4" />
      <path d="M20 4h5v28h-5z" fill="#8a4a22" />
      <rect x="19" y="16" width="7" height="6" fill="#333" stroke="#ddd" />
    </>
  ),
  fusion: (
    <>
      <rect x="2" y="2" width="36" height="36" fill="url(#orangeTile)" />
      <path d="M13 9q0-3 4-3h11l-1 6h-7v5h6l-1 5h-5v10l-7-3z" fill="#d98230" />
      <path d="M13 9q0-3 4-3l3 6v20l-7-3z" fill="#a86529" />
      <S_LogoText x="21" y="36" fill="#e8792a" $size={7}>360</S_LogoText>
    </>
  ),
  photos: (
    <>
      <rect x="4" y="5" width="31" height="29" fill="#161616" stroke="#fff" strokeWidth="1.6" />
      <path d="M4 28l11-14 11 14 1 7H4z" fill="#fff" />
      <path d="M22 21l4-4 9 14v4h-8z" fill="#fff" />
    </>
  ),
  inkscape: (
    <>
      <path d="M20 3q2 0 4 3l10 11q4 4-1 6l-6 2q-4 1-1 3l3 2q-5 3-8 5-4-3-7-5-5-1-1-3 2-2-3-3l-4-2q-3-2 0-6L16 6q2-3 4-3z" fill="url(#ink)" />
      <path d="M8 21l7-5 4 2 3-3 4 3 6 3-6 4-4 1 2 4-4 4-5-4 2-4z" fill="#0a0c12" />
      <path d="M28 29h4M8 29h4" stroke="#556" strokeWidth="2" />
    </>
  ),
  utorrent: (
    <>
      <circle cx="20" cy="20" r="18" fill="#6fb53a" />
      <path d="M4 12a18 18 0 0 1 32 0q-16 10-32 0z" fill="#8fcb55" fillOpacity="0.6" />
      <S_LogoText x="11" y="28" fill="#fff" $size={30}>µ</S_LogoText>
    </>
  ),
};

const TaskIcon = ({ name }) => {
  if (name === 'edge') return <FaEdgeLegacy size={34} color="#0078d7" />;
  return (
    <svg width="40" height="40" viewBox="0 0 40 40">
      {taskDrawings[name]}
    </svg>
  );
};

const Tray = () => (
  <S_Tray>
    <S_PeopleButton aria-label="People">
      <svg width="22" height="24" viewBox="0 0 22 24" fill="none" stroke="#fff" strokeWidth="1.5">
        <circle cx="15" cy="4" r="3.5" />
        <path d="M11 12c1-5 9-5 10 2" />
        <circle cx="7" cy="12" r="3.5" />
        <path d="M1 23c0-9 11-9 12 0" />
      </svg>
    </S_PeopleButton>
    <S_PlainButton aria-label="Show hidden icons">
      <svg width="18" height="12" viewBox="0 0 18 12" fill="none" stroke="#fff" strokeWidth="1.5">
        <path d="M1 10l8-8 8 8" />
      </svg>
    </S_PlainButton>
    <S_TrayIcons>
      <svg width="24" height="20" viewBox="0 0 24 20" fill="none" stroke="#fff" strokeWidth="1.5">
        <path d="M7 6h14v11H6v-4M21 9h2v5h-2M4 8v9h2M2 1v3M6 1v3M1 4h6v2q0 2-3 2T1 6z" />
        <path d="M9 8h10v7H9z" fill="#fff" />
      </svg>
      <svg width="24" height="20" viewBox="0 0 24 20" fill="none" stroke="#fff" strokeWidth="1.4">
        <path d="M1 7h3l6-5v16l-6-5H1zM13 8q1 2 0 4M16 5q3 5 0 10M19 2q5 8 0 16" />
      </svg>
      <svg width="24" height="24" viewBox="0 0 24 24" fill="none" stroke="#fff" strokeWidth="1.4">
        <path d="M1 7h2l3 3h6L9 1h3l6 9h3q4 2 0 4h-3l-6 9H9l3-9H6l-3 3H1l2-5z" />
      </svg>
    </S_TrayIcons>
    <S_Language>ENG</S_Language>
    <S_Clock>
      <time>18:34</time>
      <time>09-03-2019</time>
    </S_Clock>
    <S_Notifications aria-label="Notifications">
      <svg width="24" height="24" viewBox="0 0 24 24">
        <path d="M0 0h24v19H14l-5 5v-5H0z" fill="#fff" />
        <path d="M5 5h14M5 9h14M5 13h10" stroke="#1b1b1b" strokeWidth="1.4" />
      </svg>
      <S_Badge>3</S_Badge>
    </S_Notifications>
    <S_ShowDesktop aria-label="Show desktop" />
  </S_Tray>
);

const GlobalStyle = createGlobalStyle`
  * {
    box-sizing: border-box;
  }

  body {
    margin: 0;
    background: #fff;
    color: #444;
    font-family: 'Liberation Sans', Arial, sans-serif;
    font-size: 16px;
  }

  button,
  input {
    font: inherit;
    color: inherit;
  }

  svg {
    display: block;
    flex: none;
  }
`;

const windowsFont = css`
  font-family: 'Open Sans', 'Noto Sans', sans-serif;
`;

const S_App = styled.div`
  display: flex;
  flex-direction: column;
  min-height: 100vh;
`;

const S_Defs = styled.svg`
  position: absolute;
  width: 0;
  height: 0;
`;

const S_PlainButton = styled.button`
  display: flex;
  align-items: center;
  gap: ${({ $gap }) => $gap || 0}px;
  padding: 0;
  border: 0;
  background: none;
  cursor: pointer;
`;

const S_Caret = styled.span`
  border: solid transparent;
  border-width: 6px 4px 0;
  border-top-color: ${({ $light }) => ($light ? '#9a9a9a' : '#333')};
`;

const S_TitleBar = styled.header`
  display: flex;
  align-items: center;
  height: 35px;
  padding: 0 2px;
`;

const S_TitleText = styled.h1`
  ${windowsFont}
  flex: 1;
  margin: 0 0 0 5px;
  font-size: 17px;
  font-weight: 400;
  line-height: 24px;
  color: #000;
`;

const S_WindowControl = styled.button`
  display: flex;
  align-items: center;
  justify-content: center;
  width: 70px;
  height: 35px;
  padding: 0;
  border: 0;
  background: none;
`;

const S_TabBar = styled.nav`
  display: flex;
  align-items: flex-end;
  gap: 2px;
  height: 59px;
  padding-left: 31px;
  border-bottom: 1px solid #9fb0c0;
  background: #56728c;
`;

const S_Tab = styled.div`
  display: flex;
  align-items: center;
  width: 298px;
  height: 46px;
  padding: 2px 14px 0 15px;
  border-radius: 6px 6px 0 0;
  background: #f3f3f5;
`;

const S_TabName = styled.span`
  flex: 1;
  margin-left: 14px;
  font-size: 18px;
  font-weight: 700;
  color: #777;
`;

const S_SyncRing = styled.span`
  align-self: flex-start;
  width: 14px;
  height: 14px;
  margin: 4px 12px 0 0;
  border: 2px solid #96d6c6;
  border-radius: 50%;
`;

const S_NewTab = styled.button`
  display: flex;
  align-items: center;
  justify-content: center;
  width: 46px;
  height: 46px;
  padding: 0;
  border: 0;
  border-radius: 6px 6px 0 0;
  background: #465a72;
`;

const S_QuickBar = styled.div`
  display: flex;
  align-items: center;
  justify-content: space-between;
  height: 40px;
  padding: 0 20px 2px 17px;
  background: #f1f1f1;
`;

const S_QuickGroup = styled.div`
  display: flex;
  align-items: center;
  gap: ${({ $gap }) => $gap}px;
`;

const S_UserButton = styled(S_PlainButton)`
  padding-left: 6px;
`;

const S_HelpDisc = styled.span`
  width: 24px;
  height: 24px;
  border-radius: 50%;
  background: #6e6e6e;
  color: #fff;
  font-size: 20px;
  font-weight: 700;
  line-height: 24px;
  text-align: center;
`;

const S_Viewport = styled.main`
  position: relative;
  display: flex;
  flex: 1;
  flex-direction: column;
  padding: 6px 0 6px 6px;
`;

const S_Ribbon = styled.div`
  display: flex;
  align-self: flex-start;
  height: 90px;
  background: #f1f1f1;
`;

const S_Workspace = styled.div`
  display: flex;
  align-items: center;
  width: 177px;
  padding: 2px 0 0 9px;
`;

const S_Grip = styled.span`
  width: 8px;
  height: 34px;
  border: solid #c6c6c6;
  border-width: 0 2px;
`;

const S_WorkspaceButton = styled(S_PlainButton)`
  margin-left: 49px;
  font-size: 15px;
  font-weight: 700;
`;

const S_RibbonGroup = styled.section`
  display: flex;
  flex-direction: column;
  align-items: center;
  width: ${({ $width }) => $width}px;
  padding-top: 3px;
  background: linear-gradient(#dcdcdc, #dcdcdc) 0 6px / 2px 77px no-repeat;
`;

const S_RibbonIcons = styled.div`
  display: flex;
  align-items: center;
  gap: 16px;
  height: 57px;
`;

const S_RibbonTool = styled.button`
  display: flex;
  align-items: center;
  justify-content: center;
  width: ${({ $active }) => ($active ? 57 : 48)}px;
  height: ${({ $active }) => ($active ? 57 : 48)}px;
  padding: 0;
  border: 0;
  background: ${({ $active }) => ($active ? '#0a96da' : 'none')};
`;

const S_RibbonLabel = styled(S_PlainButton)`
  margin-top: 10px;
  font-size: 15px;
  line-height: 18px;
`;

const S_Panel = styled.aside`
  width: 450px;
  margin-top: 6px;
`;

const S_PanelHeader = styled.div`
  display: flex;
  align-items: center;
  width: 450px;
  height: 38px;
  padding: 0 2px 2px 7px;
  border: 1px solid #c4c4c4;
  border-top-color: ${({ $bottom }) => ($bottom ? '#f1f1f1' : '#c4c4c4')};
  background: #f1f1f1;
`;

const S_PanelIndent = styled.span`
  width: 16px;
`;

const S_PanelTitle = styled.h2`
  flex: 1;
  margin: 0 0 0 14px;
  font-size: 15px;
  font-weight: 400;
  color: #777;
`;

const S_PanelGrip = styled.span`
  width: 5px;
  height: 16px;
  margin-left: 10px;
  border: solid #8a8a8a;
  border-width: 0 1px;
`;

const S_Tree = styled.ul`
  display: flex;
  flex-direction: column;
  gap: 6px;
  margin: 7px 0 0;
  padding: 0;
  list-style: none;
`;

const S_TreeRow = styled.li`
  display: flex;
  align-items: center;
  height: 30px;
  padding-left: ${({ $level }) => 19 + $level * 27}px;
`;

const S_Toggle = styled(S_PlainButton)`
  justify-content: center;
  width: 29px;
  height: 30px;
  margin-right: 6px;
`;

const S_TreeChip = styled.div`
  display: flex;
  align-items: center;
  height: 30px;
  background: #f1f1f1;
`;

const S_BulbButton = styled(S_PlainButton)`
  justify-content: center;
  width: 31px;
  margin-right: 6px;
`;

const S_TreeItem = styled(S_PlainButton)`
  gap: 21px;
  height: 30px;
  padding: 0 16px 0 5px;

  ${({ $root }) =>
    $root &&
    css`
      height: 24px;
      background: #999;
      color: #fff;
      font-weight: 700;
    `}

  ${({ $selected }) =>
    $selected &&
    css`
      background: #0a96da;
      color: #fff;
      font-weight: 700;
    `}

  ${({ $hatched }) =>
    $hatched &&
    css`
      background: repeating-linear-gradient(120deg, #8497b8 0 4px, transparent 4px 8px) 0 22px / 118px 6px no-repeat;
    `}
`;

const S_Radio = styled.input`
  appearance: none;
  width: 20px;
  height: 20px;
  margin: 0 12px 0 6px;
  border: 2px solid #444;
  border-radius: 50%;
  background: radial-gradient(circle, #333 0 3px, #fff 4px);
`;

const S_Model = styled.svg`
  position: absolute;
  top: 98px;
  left: 628px;
  stroke-linejoin: round;
`;

const S_ViewCube = styled.svg`
  position: absolute;
  top: 18px;
  right: 14px;
`;

const S_AxisText = styled.text`
  font-size: 14px;
  font-weight: 700;
`;

const S_CubeText = styled.text`
  font-family: Roboto, 'Liberation Sans', sans-serif;
  font-size: 9px;
  font-weight: 700;
  fill: #9a9da2;
`;

const S_ViewportFooter = styled.div`
  display: grid;
  grid-template-columns: 1fr auto 1fr;
  align-items: center;
  margin-top: auto;
  padding-right: 6px;
`;

const S_NavBar = styled.div`
  display: flex;
  align-items: center;
  gap: 9px;
  height: 36px;
  padding: 0 20px 0 4px;
  background: #f1f1f1;
`;

const S_NavGroup = styled.div`
  display: flex;
  align-items: center;
  gap: ${({ $gap }) => $gap}px;
  margin-left: ${({ $indent }) => ($indent ? 12 : 0)}px;
`;

const S_SelectionName = styled.output`
  justify-self: end;
  margin-right: 51px;
  font-weight: 700;
  color: #555;
`;

const S_Timeline = styled.footer`
  display: flex;
  align-items: center;
  height: 74px;
  padding: 0 20px 0 16px;
  border-top: 3px solid #cfcfcf;
  background: #f1f1f1;
`;

const S_Playback = styled.div`
  display: flex;
  gap: 17px;
`;

const S_Track = styled.div`
  flex: 1;
  margin-left: 35px;
  padding-top: 14px;
`;

const S_Features = styled.div`
  position: relative;
  display: flex;
  gap: 12px;
`;

const S_Feature = styled(S_PlainButton)`
  position: relative;

  ${({ $hatched }) =>
    $hatched &&
    css`
      &::before {
        content: '';
        position: absolute;
        top: -14px;
        left: 0;
        width: 23px;
        height: 8px;
        background: repeating-linear-gradient(135deg, transparent 0 3px, #555 3px 6px);
      }
    `}
`;

const S_Marker = styled.svg`
  position: absolute;
  top: -9px;
  left: 201px;
`;

const S_Bracket = styled.div`
  display: flex;
  width: 183px;
  height: 11px;
  margin: 5px 0 0 12px;
  border: solid #ccc;
  border-width: 0 0 3px 3px;
`;

const S_BracketStep = styled.span`
  flex: 1;
  border-right: 3px solid #ccc;
`;

const S_Taskbar = styled.div`
  ${windowsFont}
  display: flex;
  height: 60px;
  background: #1b1b1b;
  color: #fff;
`;

const S_Start = styled(S_PlainButton)`
  justify-content: center;
  width: 72px;
`;

const S_Search = styled.div`
  display: flex;
  align-items: center;
  width: 516px;
  padding: 0 22px 0 13px;
  border-top: 1px solid #b4b4b4;
  background: #f1f1f1;
`;

const S_SearchInput = styled.input`
  flex: 1;
  min-width: 0;
  margin-left: 13px;
  padding: 0;
  border: 0;
  outline: 0;
  background: none;
  color: #2b2b2b;
  font-size: 20px;

  &::placeholder {
    color: #2b2b2b;
    opacity: 1;
  }
`;

const S_TaskApps = styled.div`
  display: flex;
  flex: 1;
  margin-left: 5px;
`;

const S_TaskApp = styled.button`
  display: flex;
  align-items: center;
  justify-content: center;
  width: 71px;
  padding: 0;
  border: 0;
  background: ${({ $open, $active }) =>
    $open
      ? `linear-gradient(#76b9ed, #76b9ed) center bottom / ${$active ? 71 : 57}px 3px no-repeat ${
          $active ? '#494949' : 'transparent'
        }`
      : 'none'};
`;

const S_Tray = styled.div`
  display: flex;
  align-items: center;
`;

const S_PeopleButton = styled(S_PlainButton)`
  margin-right: 34px;
`;

const S_TrayIcons = styled.div`
  display: flex;
  align-items: center;
  gap: 12px;
  margin-left: 15px;
`;

const S_Language = styled.span`
  margin-left: 17px;
  font-size: 17px;
`;

const S_Clock = styled.div`
  display: flex;
  flex-direction: column;
  align-items: center;
  margin-left: 20px;
  font-size: 18px;
  line-height: 28px;
`;

const S_Notifications = styled(S_PlainButton)`
  position: relative;
  margin: 0 31px 0 29px;
`;

const S_Badge = styled.span`
  position: absolute;
  top: 12px;
  left: 12px;
  width: 24px;
  height: 24px;
  border: 1px solid #888;
  border-radius: 50%;
  background: #333;
  color: #fff;
  font-size: 17px;
  line-height: 22px;
  text-align: center;
`;

const S_ShowDesktop = styled(S_PlainButton)`
  align-self: stretch;
  width: 7px;
  border-left: 1px solid #777;
`;
